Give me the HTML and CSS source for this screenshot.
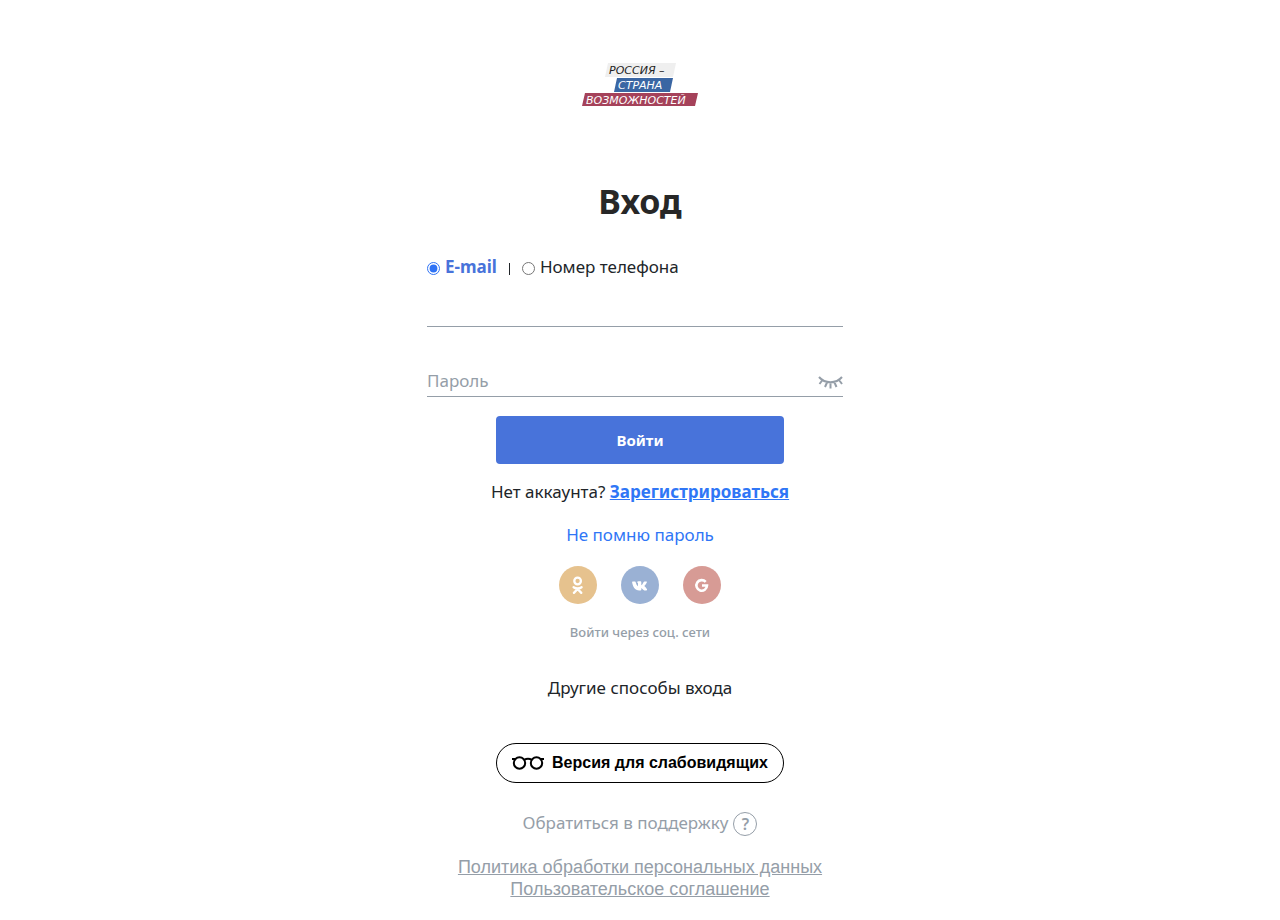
FILE: index.html
```html
<!DOCTYPE html>
<html lang="ru">
<head>
<meta charset="utf-8">
<meta name="viewport" content="width=device-width, initial-scale=1">
<title>Вход</title>
<link rel="stylesheet" href="styles.css">
</head>
<body>
<main class="page">
  <a class="logo" href="#" aria-label="Россия – страна возможностей">
    <svg width="116" height="44" viewBox="0 0 116 44" aria-hidden="true">
      <path fill="#efefef" d="M26 0H94L91 14H23Z"/>
      <path fill="#3a66a3" d="M35 15H91L88 29H32Z"/>
      <path fill="#a5425a" d="M3 30H116L113 43H0Z"/>
      <g class="logo-text">
        <text x="27" y="11" fill="#222">РОССИЯ –</text>
        <text x="36" y="26" fill="#fff">СТРАНА</text>
        <text x="4" y="41" fill="#fff">ВОЗМОЖНОСТЕЙ</text>
      </g>
    </svg>
  </a>
  <h1 class="title">Вход</h1>
  <form class="form">
    <div class="modes">
      <label class="mode"><input class="radio" type="radio" name="mode" checked><span class="mode-name">E-mail</span></label>
      <span class="divider"></span>
      <label class="mode"><input class="radio" type="radio" name="mode"><span class="mode-name">Номер телефона</span></label>
    </div>
    <div class="field"><input class="input" type="email" aria-label="E-mail"></div>
    <div class="field field-password">
      <input class="input" type="password" placeholder="Пароль" aria-label="Пароль">
      <button class="reveal" type="button" aria-label="Показать пароль">
        <svg width="25" height="14" viewBox="0 0 25 14" fill="none" stroke="#959ea8" stroke-width="2"><path d="M1 2C7 9 18 9 24 2M4.500 5L1.500 9M9 7.500L7 12M12.500 8.500V13.500M16.500 7.500L18.500 12M21 5L24 9"/></svg>
      </button>
    </div>
    <button class="submit" type="submit">Войти</button>
  </form>
  <p class="register">Нет аккаунта? <a class="register-link" href="#">Зарегистрироваться</a></p>
  <a class="forgot" href="#">Не помню пароль</a>
  <div class="socials">
    <a class="social social-ok" href="#" aria-label="Одноклассники">
      <svg width="38" height="38" viewBox="0 0 38 38" fill="none" stroke="#fff" stroke-width="2.300"><circle cx="18.600" cy="15" r="3.300"/><path stroke-linecap="round" d="M14.600 21.200Q18.600 23.800 22.600 21.200M18.600 23L14.900 26.900M18.600 23L22.300 26.900"/></svg>
    </a>
    <a class="social social-vk" href="#" aria-label="ВКонтакте">
      <svg width="38" height="38" viewBox="0 0 38 38" fill="#fff"><path d="M18.300 24.500C13.800 24.500 11.800 20.500 11.100 16.200Q11 15.500 11.800 15.500H14Q14.500 15.500 14.700 16.200C15.200 18 15.900 19.400 17 20.200V17.500Q17 16.500 16 16.200Q16.300 15.300 17.700 15.300H19.500Q20.300 15.300 20.300 16.200V19.300C21.500 18.700 22 17.400 22.600 16.100Q22.900 15.500 23.500 15.500H25.300Q26.300 15.500 25.900 16.300C25.300 17.700 24.500 18.900 23.300 20C24.400 21 25.300 22 26 23.200Q26.500 24.300 25.300 24.400H23.300C22.300 24.400 21.600 22.700 20.300 22V23.700Q20.300 24.500 19.400 24.500Z"/></svg>
    </a>
    <a class="social social-google" href="#" aria-label="Google">
      <svg width="38" height="38" viewBox="0 0 38 38" fill="none" stroke="#fff" stroke-width="2.600"><path d="M22.700 15.900A5.300 5.300 0 1 0 24 19.500H19"/></svg>
    </a>
  </div>
  <p class="social-note">Войти через соц. сети</p>
  <a class="other" href="#">Другие способы входа</a>
  <button class="vision" type="button">
    <svg width="32" height="14" viewBox="0 0 32 14" fill="none" stroke="#000" stroke-width="2"><circle cx="7.500" cy="7" r="5.700"/><circle cx="24.500" cy="7" r="5.700"/><path d="M0 3H3.500M28.500 3H32M12 4Q16 1.500 20 4"/></svg>
    Версия для слабовидящих
  </button>
  <a class="support" href="#">Обратиться в поддержку <span class="question">?</span></a>
  <footer class="legal">
    <a class="legal-link" href="#">Политика обработки персональных данных</a>
    <a class="legal-link" href="#">Пользовательское соглашение</a>
  </footer>
</main>
</body>
</html>
```
FILE: styles.css
```css
* { box-sizing: border-box; }
body {
  margin: 0;
  background: #fff;
  color: #212529;
  font: 17px/24px "Noto Sans", sans-serif;
}
.page {
  display: flex;
  flex-direction: column;
  align-items: center;
  max-width: 458px;
  margin: 0 auto;
  padding: 63px 16px 20px;
}
a { color: inherit; text-decoration: none; }
button { padding: 0; border: 0; background: none; cursor: pointer; }
svg { display: block; overflow: visible; }
.logo-text { font: italic 11px "DejaVu Sans", sans-serif; }
.title {
  margin: 70px 0 0;
  color: #272727;
  font-size: 34px;
  font-weight: 700;
  line-height: 48px;
}
.form {
  display: flex;
  flex-direction: column;
  width: 100%;
  margin-top: 30px;
}
.modes { display: flex; align-items: center; gap: 12px; }
.mode { display: flex; align-items: center; gap: 5px; }
.radio { width: 13px; height: 13px; margin: 2px 0 0; accent-color: #2f73f5; }
.radio:checked + .mode-name { color: #4873da; font-weight: 700; }
.divider { width: 1px; height: 12px; margin-top: 4px; background: #212529; }
.field {
  display: flex;
  align-items: center;
  height: 32px;
  margin: 16px 10px 0 0;
  border-bottom: 1px solid #959ea8;
}
.field-password { margin-top: 38px; }
.input {
  flex: 1;
  min-width: 0;
  padding: 0;
  border: 0;
  outline: 0;
  background: none;
  color: inherit;
  font: inherit;
}
.input::placeholder { color: #959ea8; opacity: 1; }
.reveal { padding-top: 2px; }
.submit {
  align-self: center;
  width: 288px;
  height: 48px;
  margin-top: 19px;
  border-radius: 4px;
  background: #4873da;
  color: #fff;
  font: 700 15px "Noto Sans", sans-serif;
}
.register { margin: 16px 0 0; }
.register-link { color: #2f76f6; font-weight: 700; text-decoration: underline; }
.forgot { margin-top: 19px; color: #2f76f6; }
.socials { display: flex; gap: 24px; margin-top: 19px; }
.social { width: 38px; height: 38px; border-radius: 50%; }
.social-ok { background: #e6c28e; }
.social-vk { background: #9ab1d4; }
.social-google { background: #d79b95; }
.social-note { margin: 18px 0 0; color: #959ea8; font-size: 13px; font-weight: 500; line-height: 20px; }
.other { margin-top: 34px; }
.vision {
  display: flex;
  align-items: center;
  justify-content: center;
  gap: 8px;
  width: 288px;
  height: 40px;
  margin-top: 43px;
  border: 1px solid #000;
  border-radius: 20px;
  color: #000;
  font: 700 16px "Liberation Sans", Arial, sans-serif;
}
.support { display: flex; gap: 5px; margin-top: 28px; color: #959ea8; }
.question {
  width: 24px;
  height: 24px;
  margin-top: 1px;
  border: 1px solid #959ea8;
  border-radius: 50%;
  font-weight: 600;
  font-size: 16px;
  line-height: 22px;
  text-align: center;
}
.legal {
  display: flex;
  flex-direction: column;
  align-items: center;
  margin-top: 20px;
  color: #959ea8;
  font: 18px/22px "Liberation Sans", Arial, sans-serif;
  text-align: center;
}
.legal-link { text-decoration: underline; }
```
